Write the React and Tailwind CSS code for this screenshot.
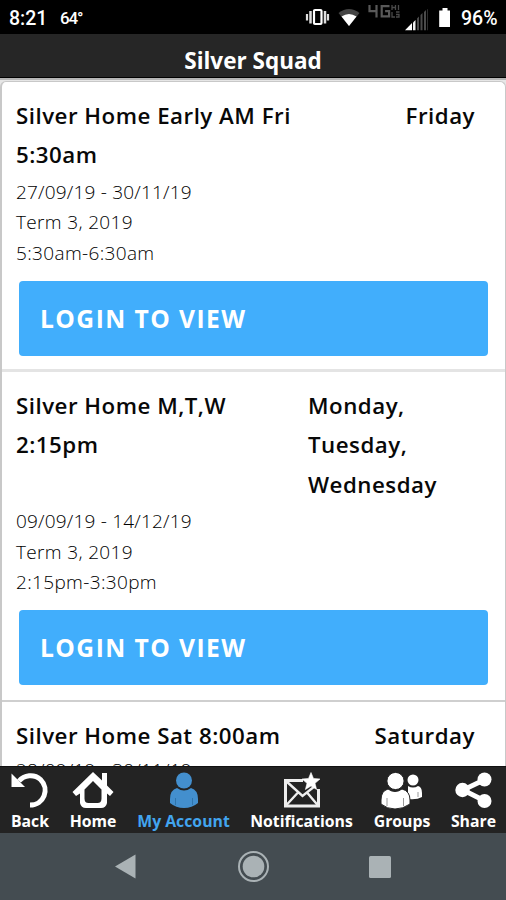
const classes = [
  {
    title: ['Silver Home Early AM Fri', '5:30am'],
    days: ['Friday'],
    details: ['27/09/19 - 30/11/19', 'Term 3, 2019', '5:30am-6:30am'],
    height: 'h-[290px]',
    border: 'border-b-[3px] border-[#e4e4e4]',
    gap: 'pt-[2px]',
  },
  {
    title: ['Silver Home M,T,W', '2:15pm'],
    days: ['Monday,', 'Tuesday,', 'Wednesday'],
    details: ['09/09/19 - 14/12/19', 'Term 3, 2019', '2:15pm-3:30pm'],
    height: 'h-[330px]',
    border: 'border-b-2 border-[#cfcfcf]',
    gap: 'pt-[2px]',
  },
  {
    title: ['Silver Home Sat 8:00am'],
    days: ['Saturday'],
    details: ['28/09/19 - 30/11/19'],
    height: 'h-[290px]',
    border: '',
    gap: 'pt-0',
  },
];

function StatusBar() {
  return (
    <div className="flex h-[34px] shrink-0 items-center bg-black pt-[3px] text-white">
      <span className="ml-[9px] w-[51px] font-[Roboto] text-[19.5px] font-medium leading-none">8:21</span>
      <span className="font-[Roboto] text-[17px] font-medium leading-none tracking-[-1.2px]">64°</span>
      <svg className="ml-auto mt-[-3px] h-[34px] w-[150px] shrink-0" viewBox="300 0 150 34">
        <g stroke="#ddd" fill="none">
          <rect x="314" y="10" width="7.5" height="14" rx="1" stroke="#fff" strokeWidth="2.2" />
          <path d="M310.500 11v12.500M325 11v12.500" strokeWidth="2.500" />
          <path d="M307 14v6.500M328 14v6.500" strokeWidth="2.200" />
        </g>
        <path d="M338.500 13q10.500-8 21 0L349 26Z" fill="#444" />
        <path d="M341.500 16.500q7.500-5 15 0L349 26Z" fill="#fff" />
        <g stroke="#595959" strokeWidth="2.200" fill="none">
          <path d="M369.500 5v6.200h8M376.500 5v12.500" />
          <path d="M389.500 6.100h-7.800v10.300h7.400v-5.200h-4" />
        </g>
        <g stroke="#4a4a4a" strokeWidth="1.300" fill="none">
          <path d="M392 5v5M392 7.500h3M395.500 5v5M398.500 5v5M392 12v5h3M396 12h3.500M396 14.500h3v2.500h-3" />
        </g>
        <path d="M405 30.300l7-7.300v7.300z" fill="#fff" />
        <path d="M413 22.500l2.500-2.500v10.300H413z" fill="#eee" />
        <g fill="#4b4b4b">
          <path d="M417 18.500l2-2v13.800h-2zM420.500 15l2-2v17.300h-2zM424 12l2-2v20.300h-2zM427 9.500l.6-.6v21.400h-.6z" />
        </g>
        <path d="M442.500 8h5v2.500h3.300v16.500h-11.600V10.500h3.300z" fill="#fff" />
      </svg>
      <span className="ml-[11px] w-[45px] whitespace-nowrap font-[Roboto] text-[19.500px] font-medium leading-none">96%</span>
    </div>
  );
}

function ClassItem({ item }) {
  return (
    <article className={`${item.height} ${item.border} shrink-0 pl-[14px] pr-[16px] pt-[14px]`}>
      <div className="flex justify-between pr-[14px] text-[22.300px] font-semibold leading-[39.300px] tracking-[0.500px] text-[#080808]">
        <div>
          {item.title.map((line) => (
            <div key={line} className="whitespace-nowrap">{line}</div>
          ))}
        </div>
        <div className={item.days.length > 1 ? 'w-[167px]' : ''}>
          {item.days.map((line) => (
            <div key={line}>{line}</div>
          ))}
        </div>
      </div>
      <div className={`${item.gap} text-[19px] font-light leading-[30.700px] tracking-[0.200px] text-black`}>
        {item.details.map((line, i) => (
          <div key={line} className={i === 0 ? '' : 'tracking-[0.350px]'}>{line}</div>
        ))}
      </div>
      {item.details.length > 1 && (
        <button className="ml-[3px] mt-[12px] flex h-[75px] w-[469px] items-center rounded-[4px] bg-[#41aefc] pl-[21px] pt-[2px] text-[24.600px] font-bold tracking-[1.450px] text-white">
          LOGIN TO VIEW
        </button>
      )}
    </article>
  );
}

function BackIcon() {
  return (
    <svg className="h-9 w-10" viewBox="0 0 40 36" fill="none">
      <path d="M9 9C14 3 24 1.500 30.500 7.500c9.500 9.500 3.500 25.500-10.500 25.500" stroke="#fff" strokeWidth="5" />
      <path d="M1.500 1.500v13.500h13.500z" fill="#fff" />
    </svg>
  );
}

function HomeIcon() {
  return (
    <svg className="h-9 w-[42px]" viewBox="0 0 42 36">
      <path
        fill="#fff"
        fillRule="evenodd"
        d="M21 0l9 8.500V1h5v12.500l6.500 6.500-3.500 4-3-2.500V31q-1 5-6 5H14q-5 0-6-5v-9.500L4 24l-3.500-4zM21 9L12.500 17.500v9q0 4.500 4 4.500h9q4 0 4-4.500v-9z"
      />
    </svg>
  );
}

function AccountIcon() {
  return (
    <svg className="h-9 w-7" viewBox="0 0 28 36">
      <g fill="#438fce">
        <circle cx="14" cy="8.500" r="8" />
        <path d="M7 16q7 5 14 0 7 2 7 11v4q-6 5-14 5T0 31v-4q0-9 7-11z" />
      </g>
      <path d="M5.500 26v7M22.500 26v7" stroke="#2f74ab" strokeWidth="1" />
    </svg>
  );
}

function NotificationsIcon() {
  return (
    <svg className="h-9 w-[38px]" viewBox="0 0 38 36">
      <g fill="none" stroke="#eee" strokeWidth="3">
        <path d="M20 8.500H2.500V34h33V17" />
        <path d="M3 9l16.500 15L32 14M3 33.500l12-13M35 33.500l-11-13" strokeWidth="2.400" />
      </g>
      <path d="M28 .5l2.500 6 6.500.5-5 4.300 1.600 6.200-5.600-3.500-5.600 3.500 1.600-6.200-5-4.300 6.500-.5z" fill="#fff" stroke="#fff" strokeWidth=".6" />
    </svg>
  );
}

function GroupsIcon() {
  return (
    <svg className="h-[37px] w-[42px]" viewBox="0 0 42 37">
      <g fill="#fff">
        <circle cx="32" cy="8" r="5.500" />
        <path d="M27 14q5 3 10 0 4 1 4 7v4q-5 3-14 2z" />
      </g>
      <g fill="#fff" stroke="#232323" strokeWidth="1">
        <path d="M7 17q7 5 14 0 8 2 8 11v4q-7 5-15 5T0 32v-4q0-9 7-11z" />
        <circle cx="14.500" cy="9" r="8.600" />
      </g>
      <path d="M6 26v8M22.500 26v8M37 20v5" stroke="#999" strokeWidth="1" />
    </svg>
  );
}

function ShareIcon() {
  return (
    <svg className="h-9 w-[37px]" viewBox="0 0 37 36" fill="#fff">
      <path d="M30 7.500L8 18l22 11" fill="none" stroke="#fff" strokeWidth="4.800" />
      <circle cx="29.500" cy="7.500" r="7" />
      <circle cx="7.500" cy="18" r="7.200" />
      <circle cx="29.500" cy="29" r="7" />
    </svg>
  );
}

const tabs = [
  { label: 'Back', Icon: BackIcon, width: 'w-[60px]' },
  { label: 'Home', Icon: HomeIcon, width: 'w-[66px]' },
  { label: 'My Account', Icon: AccountIcon, width: 'w-[115px]', active: true },
  { label: 'Notifications', Icon: NotificationsIcon, width: 'w-[121px]' },
  { label: 'Groups', Icon: GroupsIcon, width: 'w-[80px]' },
  { label: 'Share', Icon: ShareIcon, width: 'w-[63px]' },
];

export default function App() {
  return (
    <div className="flex h-[900px] w-[506px] flex-col overflow-hidden bg-white font-['Open_Sans',sans-serif]">
      <StatusBar />
      <header className="flex h-[44px] shrink-0 items-center justify-center border-b border-black bg-[#262626] pt-[11px] text-[22.500px] font-bold leading-none text-white">
        Silver Squad
      </header>
      <main className="min-h-0 flex-1 overflow-hidden border-t-2 border-[#b5b5b5] bg-[#e6e6e6]">
        <div className="mt-px flex flex-col rounded-t-[6px] border-l-2 border-r border-t border-[#c8c8c8] bg-white">
          {classes.map((item) => (
            <ClassItem key={item.title[0]} item={item} />
          ))}
        </div>
      </main>
      <nav className="flex h-[67px] shrink-0 border-t border-[#111] bg-[#232323]">
        {tabs.map(({ label, Icon, width, active }) => (
          <div key={label} className={`${width} flex shrink-0 flex-col items-center pt-[5px]`}>
            <div className="flex h-[37px] items-start"><Icon /></div>
            <span className={`${active ? 'text-[#42a5ef]' : 'text-white'} mt-[2px] whitespace-nowrap text-[15.800px] font-bold leading-[20px]`}>{label}</span>
          </div>
        ))}
      </nav>
      <div className="h-[67px] shrink-0 bg-[#444c51]">
        <svg className="h-[67px] w-[506px]" viewBox="0 0 506 67" fill="#aab2b5">
          <path d="M115 33.500l20.500-12v24z" />
          <circle cx="253.500" cy="33.500" r="10.800" />
          <circle cx="253.500" cy="33.500" r="14.500" fill="none" stroke="#aab2b5" strokeWidth="2" />
          <rect x="369" y="23" width="22" height="22" rx="1.500" />
        </svg>
      </div>
    </div>
  );
}
